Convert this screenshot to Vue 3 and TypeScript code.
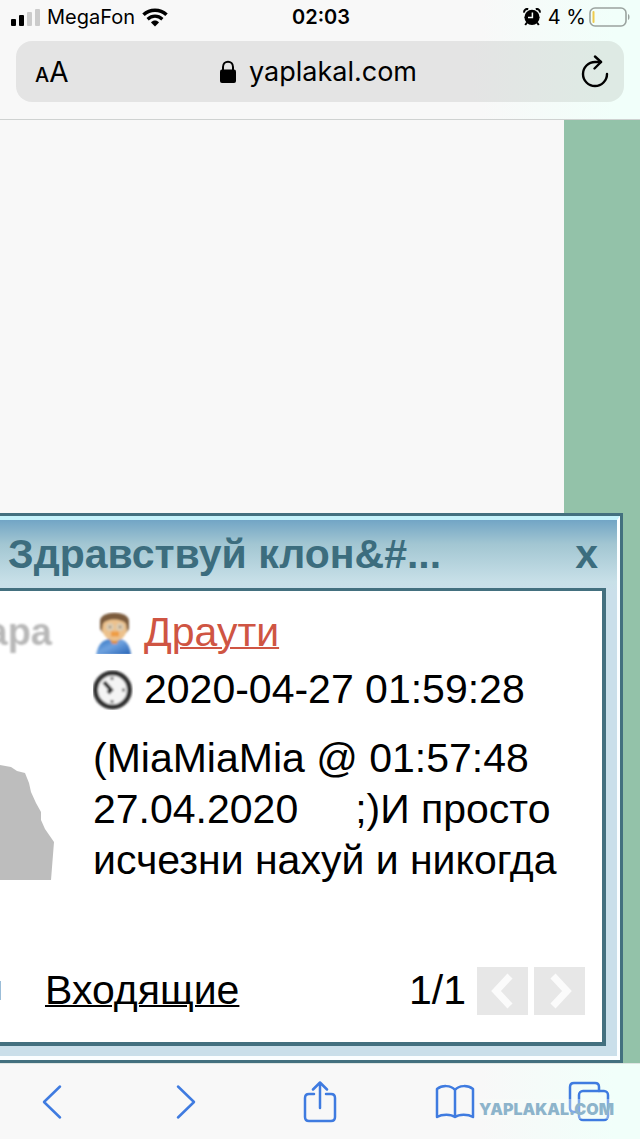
<script setup lang="ts">
interface SignalBar {
  height: number
  active: boolean
}

const signal: SignalBar[] = [
  { height: 7, active: true },
  { height: 11, active: true },
  { height: 14, active: false },
  { height: 17, active: false },
]

const message = {
  title: 'Здравствуй клон&#...',
  author: 'Драути',
  date: '2020-04-27 01:59:28',
  text: '(MiaMiaMia @ 01:57:48\n27.04.2020     ;)И просто\nисчезни нахуй и никогда',
}
</script>

<template>
  <div class="screen">
    <header class="top">
      <div class="status">
        <div class="status-left">
          <span class="signal">
            <i
              v-for="(bar, n) in signal"
              :key="n"
              :class="{ on: bar.active }"
              :style="{ height: bar.height + 'px' }"
            ></i>
          </span>
          <span>MegaFon</span>
          <svg width="26" height="19" viewBox="0 0 26 19" aria-hidden="true">
            <path d="M1.500 6.800C8 .7 18 .7 24.500 6.800" fill="none" stroke="#000" stroke-width="3.600" />
            <path d="M5.600 11.200C10 7.200 16 7.200 20.400 11.200" fill="none" stroke="#000" stroke-width="3.200" />
            <path d="M9 14.400C11.400 12 14.600 12 17 14.400L13 18.500Z" />
          </svg>
        </div>
        <time class="clock">02:03</time>
        <div class="status-right">
          <svg width="18" height="18" viewBox="0 0 18 18" aria-hidden="true">
            <circle cx="9" cy="9.3" r="7.6" />
            <path d="M1.2 4.6A3 3 0 0 1 5.2 1.2M12.8 1.2A3 3 0 0 1 16.8 4.6" fill="none" stroke="#000" stroke-width="2" />
            <path d="M4 14.5L2.2 17M14 14.5L15.8 17" stroke="#000" stroke-width="2" />
            <path d="M9.4 4.6V9.6H5" fill="none" stroke="#f6fcf9" stroke-width="1.5" />
          </svg>
          <span class="percent">4 %</span>
          <svg width="42" height="20" viewBox="0 0 42 20" aria-hidden="true">
            <rect x="1" y="1" width="36" height="18" rx="5" fill="none" stroke="#9aa39f" stroke-width="1.6" />
            <rect x="3.5" y="4" width="2" height="12" rx="1" fill="#f0cb4c" />
            <path d="M39 7C41 7.5 41 12.5 39 13Z" fill="#9aa39f" />
          </svg>
        </div>
      </div>
      <div class="address">
        <button class="text-size" type="button" aria-label="Размер текста"><small>A</small>A</button>
        <button class="url" type="button">
          <svg width="18" height="24" viewBox="0 0 18 24" aria-hidden="true">
            <rect x="1" y="9.5" width="16" height="13.5" rx="2" />
            <path d="M4 11V7C4 0 14 0 14 7V11" fill="none" stroke="#000" stroke-width="2" />
          </svg>
          <span>yaplakal.com</span>
        </button>
        <button class="reload" type="button" aria-label="Обновить">
          <svg width="28" height="34" viewBox="0 0 28 34" fill="none" stroke="#000" stroke-width="2.4" stroke-linecap="round" stroke-linejoin="round">
            <path d="M26 19A12 12 0 1 1 14 7H20" />
            <path d="M14 1.5L20 7L13.5 13.5" />
          </svg>
        </button>
      </div>
    </header>

    <main class="viewport">
      <section class="window">
        <div class="frame">
          <div class="caption">
            <h1>{{ message.title }}</h1>
            <button class="close" type="button" aria-label="Закрыть">x</button>
          </div>
          <div class="panel">
            <div class="entry">
              <div class="avatar">
                <span class="avatar-text">ара</span>
                <svg width="56" height="116" viewBox="0 0 56 116" aria-hidden="true">
                  <path d="M0 1L11 3L17 7L25 9L29 19L31 28L36 39L41 48L41 56L45 65L54 78L51 116H0Z" fill="#bdbdbd" />
                </svg>
              </div>
              <div class="content">
                <div class="line">
                  <svg width="40" height="42" viewBox="0 0 40 42" aria-hidden="true">
                    <defs>
                      <linearGradient id="shirt" x1="0" x2="1" y1="0" y2="1">
                        <stop offset="0" stop-color="#2a6fbe" />
                        <stop offset=".45" stop-color="#6fa2df" />
                        <stop offset="1" stop-color="#2562b5" />
                      </linearGradient>
                      <filter id="soft"><feGaussianBlur stdDeviation="1" /></filter>
                    </defs>
                    <g filter="url(#soft)">
                      <path d="M3 43C5 32 10 28 16 27H27C33 28 37 33 38 43Z" fill="url(#shirt)" />
                      <path d="M16 25H26L24 32H19Z" fill="#d98f42" />
                      <path d="M7 9C7 -2 36 -2 36 9V17L33 21H10L7 17Z" fill="#7b5c3d" />
                      <path d="M10 12C13 6 29 6 33 12L34 18C32 25 28 29 22 29C16 29 11 25 9 18Z" fill="#ecc18c" />
                      <circle cx="17" cy="15" r="4" fill="#dccbb0" />
                      <circle cx="27" cy="15" r="4" fill="#dccbb0" />
                      <path d="M16 15H18M26 15H28" stroke="#8a7d6a" stroke-width="2" />
                      <path d="M18 22H26" stroke="#ee9c43" stroke-width="5" />
                    </g>
                  </svg>
                  <a class="author" href="#author">{{ message.author }}</a>
                </div>
                <div class="line">
                  <svg width="40" height="40" viewBox="0 0 40 40" aria-hidden="true">
                    <g filter="url(#soft)">
                      <circle cx="19.5" cy="20" r="17" fill="#f4f4f4" stroke="#333" stroke-width="5" />
                      <path d="M11 12L18 20L15 23" fill="none" stroke="#333" stroke-width="4" />
                      <path d="M19 7V10M19 30V33M29 20H32" stroke="#777" stroke-width="3" />
                    </g>
                  </svg>
                  <time>{{ message.date }}</time>
                </div>
                <p class="text">{{ message.text }}</p>
              </div>
            </div>
            <div class="footer">
              <i class="sliver"></i>
              <a class="inbox" href="#inbox">Входящие</a>
              <span class="count">1/1</span>
              <button class="page" type="button" aria-label="Назад">
                <svg width="24" height="36" viewBox="0 0 24 36"><path d="M19 3L5 18L19 33" fill="none" stroke="#fbfbfb" stroke-width="7" /></svg>
              </button>
              <button class="page" type="button" aria-label="Вперёд">
                <svg width="24" height="36" viewBox="0 0 24 36"><path d="M5 3L19 18L5 33" fill="none" stroke="#fbfbfb" stroke-width="7" /></svg>
              </button>
            </div>
          </div>
        </div>
      </section>
    </main>

    <nav class="toolbar">
      <button type="button" aria-label="Назад">
        <svg width="42" height="42" viewBox="0 0 42 42"><path d="M29 5.5L13 21L29 36.5" /></svg>
      </button>
      <button type="button" aria-label="Вперёд">
        <svg width="42" height="42" viewBox="0 0 42 42"><path d="M13 5.5L29 21L13 36.5" /></svg>
      </button>
      <button type="button" aria-label="Поделиться">
        <svg width="42" height="42" viewBox="0 0 42 42">
          <path d="M14 13H9Q5 13 5 17V36Q5 40 9 40H31Q35 40 35 36V17Q35 13 31 13H26M20 27V1.5M13 8.5L20 1.5L27 8.5" />
        </svg>
      </button>
      <button type="button" aria-label="Закладки">
        <svg width="42" height="42" viewBox="0 0 42 42">
          <path d="M21 9C17 4 8 4 3 8V36C8 33 17 33 21 36C25 33 34 33 39 36V8C34 4 25 4 21 9V36" />
        </svg>
      </button>
      <button type="button" aria-label="Вкладки">
        <svg width="42" height="42" viewBox="0 0 42 42">
          <rect x="11" y="10" width="29" height="29" rx="4" />
          <path d="M11 31H6Q2 31 2 27V6Q2 2 6 2H27Q31 2 31 6V10" />
        </svg>
      </button>
      <span class="watermark">YAPLAKAL.COM</span>
    </nav>
  </div>
</template>

<style>
body {
  margin: 0;
}
</style>

<style scoped>
.screen {
  display: flex;
  flex-direction: column;
  min-height: 100vh;
  overflow: hidden;
  color: #000;
  font-family: Inter, "Liberation Sans", sans-serif;
}
button {
  display: flex;
  align-items: center;
  justify-content: center;
  padding: 0;
  border: 0;
  background: none;
  color: inherit;
  font: inherit;
}
.top,
.toolbar {
  background: linear-gradient(90deg, #f8f8f8 75%, #f1fffa 96%);
}
.top {
  padding-bottom: 17px;
  border-bottom: 1px solid #cfd2d1;
}
.status {
  display: grid;
  grid-template-columns: 1fr auto 1fr;
  align-items: center;
  height: 34px;
  margin-bottom: 7px;
  padding: 0 9px 0 11px;
  font-size: 20px;
}
.status-left,
.status-right {
  display: flex;
  align-items: center;
  gap: 7px;
}
.status-right {
  justify-content: flex-end;
}
.percent {
  margin-right: -4px;
}
.clock {
  font-weight: 600;
}
.signal {
  display: flex;
  align-items: flex-end;
  gap: 3px;
}
.signal i {
  width: 5px;
  border-radius: 1px;
  background: #cbcbcb;
}
.signal .on {
  background: #000;
}
.address {
  display: grid;
  grid-template-columns: 1fr auto 1fr;
  align-items: center;
  height: 61px;
  margin: 0 16px;
  padding: 0 15px 0 19px;
  border-radius: 16px;
  background: linear-gradient(90deg, #e4e4e4 75%, #deeae4 96%);
}
.text-size {
  justify-self: start;
  align-items: baseline;
  font-size: 28px;
}
.text-size small {
  font-size: 20px;
  font-weight: 500;
}
.url {
  gap: 12px;
  margin-right: 8px;
  font-size: 27px;
}
.reload {
  justify-self: end;
}
.viewport {
  display: flex;
  flex: 1;
  flex-direction: column;
  justify-content: flex-end;
  background: linear-gradient(#93c2a9, #93c2a9) right / 76px 100% no-repeat #f8f8f8;
  font-family: "Liberation Sans", Arial, sans-serif;
  font-size: 41px;
  line-height: 51px;
}
.window {
  margin-right: 17px;
  border: solid #43707f;
  border-width: 3px 3px 3px 0;
}
.frame {
  padding: 0 11px 10px 0;
  border: solid #fbfeff;
  border-width: 4px 3px 4px 0;
  border-top-color: #c3f2fb;
  background: linear-gradient(#72a5c5, #a2c6d2 24px, #c8e0e8 62px, #cadfea 72px);
}
.caption {
  display: flex;
  align-items: center;
  justify-content: space-between;
  height: 68px;
  padding: 0 8px;
  color: #3c6d7e;
  font-weight: 700;
}
.caption h1 {
  margin: 0;
  font-size: 41px;
  font-weight: 700;
  white-space: nowrap;
}
.panel {
  padding: 16px 17px 26px 0;
  border: solid #43707f;
  border-width: 3px 4px 4px 0;
  background: #fff;
}
.entry {
  display: flex;
  gap: 41px;
}
.avatar {
  display: flex;
  flex: none;
  flex-direction: column;
  align-items: flex-end;
  gap: 106px;
  width: 52px;
}
.avatar svg {
  align-self: flex-start;
}
.avatar-text {
  color: #b8b8b8;
  filter: blur(1px);
  font-size: 38px;
  font-weight: 700;
}
.content {
  white-space: nowrap;
}
.line {
  display: flex;
  align-items: center;
  gap: 11px;
  margin-bottom: 6px;
}
.author {
  color: #cf5543;
  text-decoration-thickness: 2px;
}
.text {
  margin: 18px 0 0;
  white-space: pre;
}
.footer {
  display: flex;
  align-items: center;
  gap: 6px;
  margin-top: 79px;
}
.sliver {
  width: 1px;
  height: 19px;
  background: #9bbdd8;
}
.inbox {
  margin-left: 38px;
  color: #000;
  text-decoration-thickness: 2px;
}
.count {
  margin: 0 5px 0 auto;
}
.page {
  width: 51px;
  height: 48px;
  background: #e7e7e7;
}
.toolbar {
  position: relative;
  display: flex;
  align-items: center;
  justify-content: space-between;
  height: 76px;
  padding: 0 30px 0 31px;
  border-top: 1px solid #dfe6e3;
  box-sizing: border-box;
}
.toolbar svg {
  fill: none;
  stroke: #3f7be0;
  stroke-width: 2.5;
  stroke-linecap: round;
  stroke-linejoin: round;
}
.watermark {
  position: absolute;
  right: 26px;
  bottom: 20px;
  background: rgba(248, 251, 250, 0.35);
  color: #8db4cb;
  font-size: 16px;
  font-weight: 900;
  line-height: 20px;
}
</style>
